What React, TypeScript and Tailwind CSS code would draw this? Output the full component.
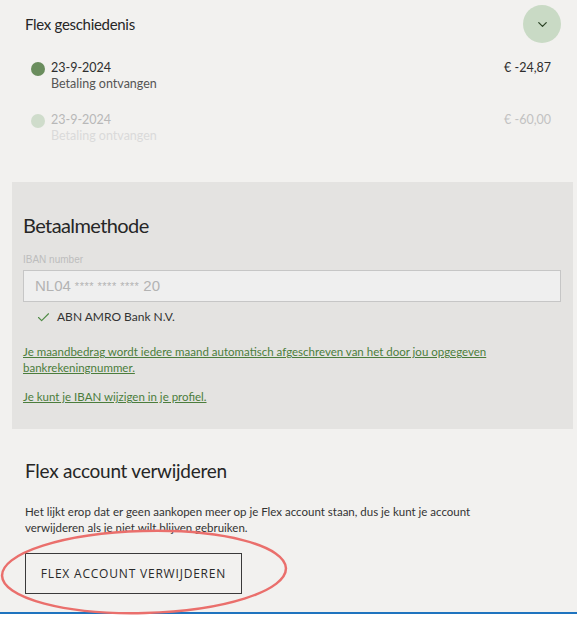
import { Check, ChevronDown } from 'lucide-react';

const body = { fontFamily: 'Lato, "Open Sans", sans-serif' };
const heading = { fontFamily: 'Lato, "Noto Sans", sans-serif' };
const arial = { fontFamily: '"Liberation Sans", Arial, sans-serif' };

const history = [
  { date: '23-9-2024', label: 'Betaling ontvangen', amount: '€ -24,87', faded: false },
  { date: '23-9-2024', label: 'Betaling ontvangen', amount: '€ -60,00', faded: true },
];

export default function App() {
  return (
    <div className="relative w-[577px] h-[618px] overflow-hidden bg-white" style={body}>
      <div className="h-[612px] bg-[#f2f1ef]">
        {/* geschiedenis */}
        <div className="pl-[25px] pr-[16px] pt-[4px]">
          <div className="flex items-center justify-between h-[40px]">
            <h2 className="text-[15px] tracking-[-0.3px] text-[#262626]" style={heading}>Flex geschiedenis</h2>
            <button className="w-[38px] h-[38px] rounded-full bg-[#c9dac5] flex items-center justify-center">
              <ChevronDown size={15} strokeWidth={2} className="text-[#2c4427]" />
            </button>
          </div>
          <div className="mt-[16px] pl-[6px] pr-[10px] space-y-[20px]">
            {history.map((h, i) => (
              <div key={i} className="flex items-start justify-between">
                <div className="flex items-start gap-[6px]">
                  <span className={`mt-[2px] w-[14px] h-[14px] rounded-full ${h.faded ? 'bg-[#cfdccb]' : 'bg-[#6a8d5d]'}`} />
                  <div className="leading-[16px] text-[12.5px]">
                    <div className={h.faded ? 'text-[#b8b8b8]' : 'text-[#2e2e2e]'}>{h.date}</div>
                    <div className={h.faded ? 'text-[#dadada]' : 'text-[#555]'}>{h.label}</div>
                  </div>
                </div>
                <div className={`text-[12.5px] leading-[16px] ${h.faded ? 'text-[#c2c2c2]' : 'text-[#2e2e2e]'}`}>{h.amount}</div>
              </div>
            ))}
          </div>
        </div>

        {/* betaalmethode */}
        <div className="ml-[12px] mr-[4px] mt-[38px] h-[247px] bg-[#e4e3e1] pl-[11px] pr-[12px] pt-[30px]">
          <h2 className="text-[20px] leading-[26px] tracking-[-0.6px] text-[#262626]" style={heading}>Betaalmethode</h2>
          <div className="mt-[15px] text-[10px] leading-[14px] text-[#bdbdbd]" style={arial}>IBAN number</div>
          <div className="mt-[3px] h-[32px] border border-[#c6c6c6] bg-[#efefef] flex items-center px-[11px] text-[15px] text-[#b3b3b3]" style={arial}>
            NL04 <span className="text-[11px] mx-[4px] tracking-[0.5px]">**** **** ****</span> 20
          </div>
          <div className="mt-[6px] flex items-center gap-[6px] pl-[13px] text-[12px] text-[#333] leading-[18px]">
            <Check size={15} strokeWidth={1.8} className="text-[#4f8a45]" />
            <span>ABN AMRO Bank N.V.</span>
          </div>
          <a href="#" className="block mt-[18px] text-[11.5px] leading-[16px] text-[#4b7d3c] underline">
            Je maandbedrag wordt iedere maand automatisch afgeschreven van het door jou opgegeven bankrekeningnummer.
          </a>
          <a href="#" className="block mt-[13px] text-[11.5px] leading-[16px] text-[#4b7d3c] underline">
            Je kunt je IBAN wijzigen in je profiel.
          </a>
        </div>

        {/* verwijderen */}
        <div className="px-[25px] pt-[30px]">
          <h2 className="text-[19px] leading-[24px] tracking-[-0.25px] text-[#262626]" style={heading}>Flex account verwijderen</h2>
          <p className="mt-[21px] max-w-[450px] text-[11.5px] leading-[16px] text-[#333]">
            Het lijkt erop dat er geen aankopen meer op je Flex account staan, dus je kunt je account verwijderen als je niet wilt blijven gebruiken.
          </p>
          <button className="mt-[17px] w-[217px] h-[41px] border border-[#3a3a3a] bg-[#f2f1ef] text-[12px] tracking-[0.8px] text-[#2a2a2a] font-medium" style={{ fontFamily: '"Open Sans", sans-serif' }}>
            FLEX ACCOUNT VERWIJDEREN
          </button>
        </div>
      </div>
      <div className="h-[2px] bg-[#1f74bf]" />

      {/* annotatie */}
      <svg className="absolute left-0 top-[526px] pointer-events-none" width="300" height="92" viewBox="0 0 300 92">
        <ellipse cx="144" cy="46" rx="142" ry="41" fill="none" stroke="#ea6f6c" strokeWidth="2.5" transform="rotate(-1.5 144 46)" />
      </svg>
    </div>
  );
}
